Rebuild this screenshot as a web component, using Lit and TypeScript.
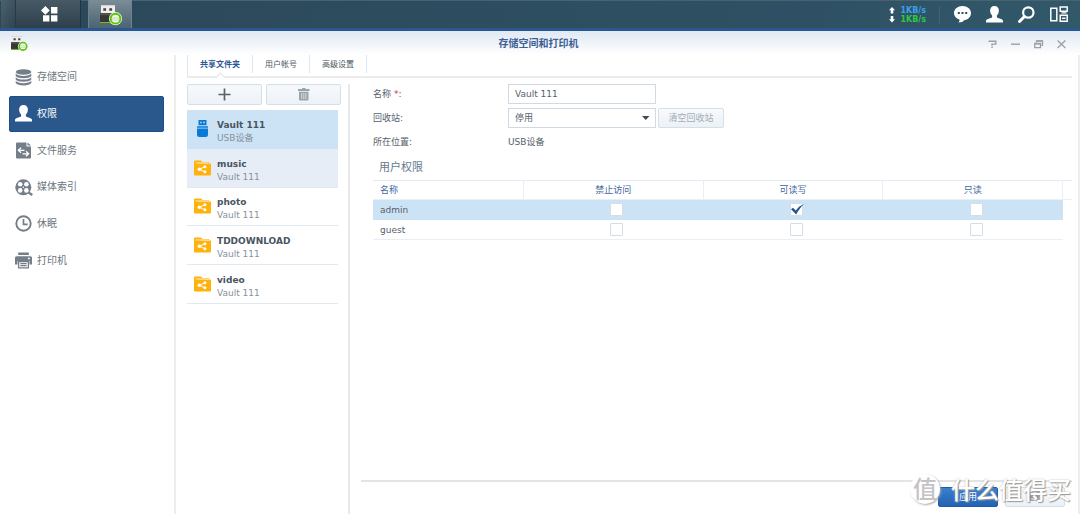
import { LitElement, html, svg, css, nothing } from "lit";
import { customElement, property, state } from "lit/decorators.js";

const glyphs: Record<string, unknown> = {
  apps: svg`<path fill="#fff" d="M4.4 0 8.8 4.4 4.4 8.8 0 4.4Z M10 1h6.4v6.4H10Z M2 9.2h6.4v6.4H2Z M10 9.2h6.4v6.4H10Z"/>`,
  chat: svg`<path fill="#fff" d="M8.5 0C13.2 0 17 3 17 7s-3.400 7-7 7.200C9 15.500 7.500 16.500 4.500 16.500 5.500 15.500 5.600 14.700 5.400 13.500 2.300 12.500 0 10 0 7 0 3 3.800 0 8.500 0Z"/><path fill="#2c4c5e" d="M3.800 6h2v2h-2Z M7.500 6h2v2h-2Z M11.200 6h2v2h-2Z"/>`,
  user: svg`<path fill="currentColor" d="M8.500 0c2.700 0 4.400 1.800 4.400 4.500 0 2.200-.9 4-2 5v1.700c.7 1.200 5.800 1.400 6.100 3.600V16.500H0V14.800c.3-2.200 5.400-2.400 6.100-3.600V9.500c-1.100-1-2-2.800-2-5C4.100 1.800 5.800 0 8.500 0Z"/>`,
  search: svg`<circle cx="10.300" cy="6.500" r="5.200" fill="none" stroke="#fff" stroke-width="2.200"/><path d="M6.500 10.500 1.500 15.500" stroke="#fff" stroke-width="3" stroke-linecap="round"/>`,
  widgets: svg`<path fill="none" stroke="#fff" stroke-width="1.500" d="M.8 2.200h6v12.600h-6Z M10.200 1h7v4.300h-7Z M10.200 9.300h7v6h-7Z"/><path fill="#fff" d="M11.500 6.300h5v1.200h-5Z M12 11.500h3.500v1.500H12Z"/>`,
  disks: svg`<g fill="#747e88"><ellipse cx="8.500" cy="3" rx="7.800" ry="2.800"/><path d="M.7 4.500C2.500 7.800 14.500 7.800 16.300 4.500V7C14.500 10 2.500 10 .7 7Z M.7 8.200C2.500 11.400 14.500 11.400 16.300 8.200V10.600C14.500 13.600 2.500 13.600 .7 10.600Z M.7 11.800C2.500 15 14.500 15 16.300 11.800V14C14.500 17.300 2.500 17.300 .7 14Z"/></g>`,
  file: svg`<path fill="#747e88" d="M2 .5h9.500v4h4.500V15.500a1 1 0 0 1-1 1H2a1 1 0 0 1-1-1V1.500a1 1 0 0 1 1-1Z M12.500.5 16 3.500h-3.500Z"/><path fill="none" stroke="#fff" stroke-width="1.300" d="M3.500 8.300h6 M6 5.800 3.400 8.300 6 10.800 M7.500 11.800h6 M11 9.300l2.600 2.500L11 14.300"/>`,
  reel: svg`<circle cx="8.300" cy="8.300" r="8" fill="#747e88"/><path d="M12 12.500 17.300 16" stroke="#747e88" stroke-width="2.200"/><g fill="#fff"><circle cx="5.200" cy="5.200" r="2.300"/><circle cx="11.400" cy="5.200" r="2.300"/><circle cx="5.200" cy="11.400" r="2.300"/><circle cx="11.400" cy="11.400" r="2.300"/><circle cx="8.300" cy="8.300" r=".8"/></g>`,
  clock: svg`<circle cx="8.500" cy="8.500" r="7.200" fill="none" stroke="#747e88" stroke-width="1.900"/><path fill="none" stroke="#747e88" stroke-width="1.700" d="M8.500 4v5.300h4.200"/>`,
  printer: svg`<path fill="#747e88" d="M3.200.5h10.600v2.600H3.200Z M1.500 4.200h14a1.500 1.500 0 0 1 1.500 1.500V12.500h-2.500V9h-12v3.500H0V5.700A1.500 1.500 0 0 1 1.500 4.200Z"/><path fill="#fff" d="M13 5.800h1.800v1.500H13Z"/><path fill="none" stroke="#747e88" stroke-width="1.300" d="M3.600 9.500h9.800v6.400H3.600Z M5.300 11.600h6.400 M5.300 13.700h6.400"/>`,
  usb: svg`<path fill="#0a7ad8" d="M2.500 0h8v5.300h-8Z M1 6.200h11v1.500H1Z M1 8.400h11V14.500a2.500 2.500 0 0 1-2.500 2.500h-6A2.500 2.500 0 0 1 1 14.500Z"/><path fill="#cce3f5" d="M4.300 1.700h1.400v1.500H4.300Z M7.300 1.700h1.400v1.500H7.300Z"/>`,
  share: svg`<path fill="#ffb20c" d="M1 3.600h15.500a.5.5 0 0 1 .5.500V14.500a1 1 0 0 1-1 1H1a1 1 0 0 1-1-1V1.500a1 1 0 0 1 1-1h6l1.500 1.500H15V3Z"/><path fill="#fff" d="M1.500 2.600h13v.7h-13Z"/><g fill="#fff"><circle cx="5.400" cy="9.300" r="1.800"/><circle cx="10.900" cy="6.800" r="1.500"/><circle cx="10.900" cy="11.800" r="1.500"/></g><path fill="none" stroke="#fff" d="M10.900 6.800 5.400 9.300l5.500 2.500"/>`,
  plus: svg`<path d="M6.500.5v12M.5 6.500h12" stroke="#56626c" stroke-width="1.700"/>`,
  trash: svg`<path fill="#9aa4ad" d="M4 0h3.500v1H11.500v2H0V1h4Z M1 3.800h9.500V11.500a1 1 0 0 1-1 1H2a1 1 0 0 1-1-1Z"/><path stroke="#dfe5eb" stroke-width=".8" d="M3.700 5v6M5.800 5v6M7.900 5v6"/>`,
  help: svg`<path fill="none" stroke="#9ba1a9" stroke-width="1.400" d="M.5 1.200h7.300v2.900H4v1.600"/><path fill="#9ba1a9" d="M3.300 6.600h1.500V8H3.300Z"/>`,
  minimize: svg`<path fill="#9ba1a9" d="M0 3.500h9v1.400H0Z"/>`,
  restore: svg`<path fill="none" stroke="#9ba1a9" stroke-width="1.300" d="M.7 3.500h5.800v4.200H.7Z M2.500 2.200V.8h6v4.500H7.500"/><path fill="#9ba1a9" d="M.7 3h5.800v1.500H.7Z M2.500.3h6v1.500h-6Z"/>`,
  close: svg`<path stroke="#9ba1a9" stroke-width="1.300" d="M.6.5 8.400 8M8.400.5.6 8"/>`,
  arrow: svg`<path fill="#3f4c57" d="M0 0h7.500L3.750 4Z"/>`,
  check: svg`<path fill="#255593" d="M0 5.200 2 3.800 4.800 6.500C7 3.500 9.500 1.300 13 0 9.800 3 7.300 6.500 5.200 10.500Z"/>`,
  rates: svg`<path fill="#fff" d="M3 0 6 3.200H4.300V6.500H1.700V3.200H0Z M3 15.500 0 12.300h1.700V9h2.600v3.300H6Z"/>`,
  device: svg`<path fill="#f0eeec" d="M2 0h14v8H2Z"/><path fill="#d7d3d0" d="M2 0h14v1.200H2Z"/><path fill="#45413f" d="M4.300 3.200h2.800v2.500H4.300Z M10.300 3.200h2.800v2.500h-2.800Z"/><path fill="#383736" d="M1 8.200h15V18H1Z"/><path fill="#575452" d="M1 8.200h15v2H1Z"/><path fill="#80b82a" d="M1 17h12v1H1Z"/><circle cx="16.500" cy="13.700" r="6.600" fill="#eef7e4"/><circle cx="16.500" cy="13.700" r="4.900" fill="#d3ecb9" stroke="#5cc313" stroke-width="2"/><path fill="#f7fff0" d="M13.800 11c.5-1 5-1 5.500 0v5.500c-.5 1-5 1-5.500 0Z"/><path stroke="#9cce76" stroke-width=".7" d="M13.800 13h5.500M13.800 15h5.500"/>`,
};

const glyph = (name: string, w: number, h: number, box = `0 0 ${w} ${h}`) =>
  html`<svg width=${w} height=${h} viewBox=${box} aria-hidden="true">${glyphs[name]}</svg>`;

const base = css`
  * {
    box-sizing: border-box;
  }
  svg {
    display: block;
    flex: none;
    overflow: visible;
  }
  button,
  input,
  select {
    font: inherit;
    color: inherit;
    margin: 0;
    padding: 0;
  }
  button {
    display: flex;
    align-items: center;
    justify-content: center;
    border: 0;
    background: none;
  }
`;

@customElement("task-bar")
class TaskBar extends LitElement {
  static styles = [
    base,
    css`
      :host {
        display: flex;
        height: 31px;
        padding-left: 1px;
        background: linear-gradient(90deg, #2b4859, #2f5064 75%, #31596a);
        border-bottom: 3px solid #2a5790;
        box-shadow: inset 0 1px #49626f;
      }
      .edge {
        width: 15px;
        background: linear-gradient(120deg, #4a626f, #2f444f);
        border-right: 1px solid #263b47;
      }
      .menu {
        width: 65px;
        padding-left: 2px;
        background: linear-gradient(#465965, #2d404c);
        border-right: 1px solid #22343f;
      }
      .running {
        width: 44px;
        margin-left: 7px;
        padding-top: 2px;
        background: linear-gradient(#7a8c97, #4c6371);
        border: 1px solid #6f838e;
        border-width: 0 1px;
      }
      .tray {
        display: flex;
        align-items: center;
        margin-left: auto;
        padding: 1px 12px 0 0;
        color: #fff;
      }
      .rates {
        display: flex;
        align-items: center;
        gap: 5px;
        font-weight: bold;
        font-size: 8px;
        line-height: 9px;
        padding-right: 13px;
        margin-right: 14px;
        border-right: 1px solid #45606f;
      }
      .up {
        color: #39a0ea;
      }
      .down {
        color: #2bc840;
      }
      .icons {
        display: flex;
        gap: 15px;
      }
    `,
  ];
  render() {
    return html`
      <span class="edge"></span>
      <button class="menu" aria-label="主菜单">${glyph("apps", 17, 16)}</button>
      <button class="running" aria-label="存储空间和打印机">${glyph("device", 22, 20)}</button>
      <div class="tray">
        <div class="rates">
          ${glyph("rates", 6, 16)}
          <div><div class="up">1KB/s</div><div class="down">1KB/s</div></div>
        </div>
        <div class="icons">
          <button aria-label="通知">${glyph("chat", 17, 17)}</button>
          <button aria-label="用户">${glyph("user", 17, 17)}</button>
          <button aria-label="搜索">${glyph("search", 17, 17)}</button>
          <button aria-label="小工具">${glyph("widgets", 18, 17)}</button>
        </div>
      </div>
    `;
  }
}

@customElement("side-nav")
class SideNav extends LitElement {
  @state() private current = "权限";
  private entries = [
    ["disks", "存储空间"],
    ["user", "权限"],
    ["file", "文件服务"],
    ["reel", "媒体索引"],
    ["clock", "休眠"],
    ["printer", "打印机"],
  ];
  static styles = [
    base,
    css`
      :host {
        display: block;
        padding: 4px 10px 0 9px;
        border-right: 2px solid #ededed;
      }
      nav {
        display: grid;
        grid-auto-rows: 1fr;
        height: 220px;
      }
      a {
        display: flex;
        align-items: center;
        gap: 5px;
        padding-left: 6px;
        font-size: 10px;
        border-radius: 2px;
        color: #6c7680;
        text-decoration: none;
      }
      .active {
        color: #fff;
        background: #2a588c;
        border: 1px solid #204e83;
        padding-left: 5px;
      }
    `,
  ];
  render() {
    return html`<nav>
      ${this.entries.map(
        ([icon, name]) => html`<a
          href="#"
          class=${name === this.current ? "active" : ""}
          @click=${(e: Event) => {
            e.preventDefault();
            this.current = name;
          }}
          >${glyph(icon, 17, 17)}${name}</a
        >`
      )}
    </nav>`;
  }
}

@customElement("folder-list")
class FolderList extends LitElement {
  private folders = [
    ["Vault 111", "USB设备"],
    ["music", "Vault 111"],
    ["photo", "Vault 111"],
    ["TDDOWNLOAD", "Vault 111"],
    ["video", "Vault 111"],
  ];
  static styles = [
    base,
    css`
      :host {
        display: block;
        padding-right: 7px;
        border-right: 2px solid #e8e8e8;
      }
      .tools {
        display: grid;
        grid-template-columns: 1fr 1fr;
        gap: 4px;
      }
      .tool {
        height: 21px;
        border: 1px solid #d5dfe8;
        border-radius: 2px;
        background: linear-gradient(#f6f9fc, #edf2f7);
      }
      ul {
        display: grid;
        grid-auto-rows: 1fr;
        height: 194px;
        margin: 5px 3px 0 0;
        padding: 0;
        list-style: none;
      }
      li {
        display: flex;
        align-items: center;
        border-bottom: 1px solid #e0e8f0;
      }
      .icon {
        display: flex;
        justify-content: center;
        width: 30px;
      }
      .caption {
        padding-top: 6px;
      }
      .device {
        background: #cce3f5;
        border-color: #cce3f5;
      }
      .hover {
        background: #e6edf6;
      }
      .name {
        font-weight: bold;
        color: #4a555f;
        line-height: 13px;
      }
      .place {
        color: #87919b;
        line-height: 13px;
      }
    `,
  ];
  render() {
    return html`
      <div class="tools">
        <button class="tool" aria-label="新增">${glyph("plus", 13, 13)}</button>
        <button class="tool" aria-label="删除" disabled>${glyph("trash", 12, 13)}</button>
      </div>
      <ul>
        ${this.folders.map(
          ([name, place], i) => html`<li class=${i === 0 ? "device" : i === 1 ? "hover" : ""}>
            <span class="icon">${i === 0 ? glyph("usb", 13, 17) : glyph("share", 17, 16)}</span>
            <div class="caption"><div class="name">${name}</div><div class="place">${place}</div></div>
          </li>`
        )}
      </ul>
    `;
  }
}

@customElement("check-box")
class CheckBox extends LitElement {
  @property({ type: Boolean }) checked = false;
  @property() name = "";
  static styles = [
    base,
    css`
      :host {
        display: block;
      }
      label {
        display: grid;
        width: 13px;
        margin: 0 auto;
      }
      input,
      svg {
        grid-area: 1 / 1;
      }
      input {
        appearance: none;
        width: 13px;
        height: 13px;
        border: 1px solid #d6dde5;
        border-radius: 1px;
        background: #fff;
      }
      svg {
        margin: 1px 0 0 1px;
        pointer-events: none;
      }
    `,
  ];
  render() {
    return html`<label>
      <input
        type="checkbox"
        aria-label=${this.name}
        .checked=${this.checked}
        @change=${(e: Event) => (this.checked = (e.target as HTMLInputElement).checked)}
      />
      ${this.checked ? glyph("check", 13, 11) : nothing}
    </label>`;
  }
}

@customElement("folder-detail")
class FolderDetail extends LitElement {
  private levels = ["禁止访问", "可读写", "只读"];
  private users = [
    { name: "admin", level: "可读写" },
    { name: "guest", level: "" },
  ];
  static styles = [
    base,
    css`
      :host {
        display: flex;
        flex-direction: column;
        color: #56616b;
      }
      .body {
        flex: 1;
        padding-left: 12px;
      }
      .form {
        display: grid;
        grid-template-columns: 135px 148px auto;
        grid-auto-rows: 20px;
        row-gap: 4px;
        column-gap: 0;
        align-items: center;
        justify-content: start;
      }
      .text,
      select {
        width: 100%;
        height: 20px;
        border: 1px solid #d0dae4;
        background: #fff;
        padding: 0 6px;
        outline: 0;
      }
      .text {
        grid-column: 2 / 4;
        width: 148px;
      }
      .required {
        color: #d0382c;
      }
      .pick {
        display: grid;
        align-items: center;
      }
      .pick > * {
        grid-area: 1 / 1;
      }
      .pick svg {
        justify-self: end;
        margin-right: 6px;
        pointer-events: none;
      }
      select {
        appearance: none;
        border-radius: 0;
      }
      .plain {
        height: 20px;
        border: 1px solid #d5dfe8;
        border-radius: 2px;
        background: linear-gradient(#f8fafc, #ecf1f7);
      }
      .clear {
        width: 66px;
        margin-left: 2px;
        color: #a3adb8;
      }
      h2 {
        margin: 8px 0 4px 6px;
        font-size: 11px;
        line-height: 16px;
        font-weight: normal;
        color: #66798d;
      }
      table {
        width: 100%;
        table-layout: fixed;
        border-collapse: separate;
        border-spacing: 0;
      }
      th,
      td {
        height: 20px;
        padding: 0;
        text-align: center;
        font-weight: normal;
        border-bottom: 1px solid #e8eff6;
      }
      th {
        color: #42699d;
        border-top: 1px solid #e3eaf1;
        border-right: 1px solid #e8eff6;
      }
      td {
        padding-left: 6px;
      }
      .first {
        width: 21.6%;
        padding-left: 7px;
        text-align: left;
      }
      .gutter {
        width: 9px;
        border-right: 0;
      }
      td.gutter {
        border: 0;
      }
      .selected td:not(.gutter) {
        background: #cce3f5;
        border-color: #cce3f5;
      }
      footer {
        display: flex;
        justify-content: flex-end;
        gap: 7px;
        padding: 5px 7px 7px;
        border-top: 2px solid #e4e4e4;
      }
      footer button {
        width: 60px;
      }
      .apply {
        height: 20px;
        color: #fff;
        border: 1px solid #1e5caa;
        border-radius: 2px;
        background: linear-gradient(#3b7fce, #2263b2);
      }
    `,
  ];
  render() {
    return html`
      <div class="body">
        <div class="form">
          <label for="name">名称 <span class="required">*</span>:</label>
          <input class="text" id="name" value="Vault 111" />
          <label for="bin">回收站:</label>
          <div class="pick">
            <select id="bin">
              <option>停用</option>
              <option>启用</option>
            </select>
            ${glyph("arrow", 8, 4)}
          </div>
          <button class="plain clear" disabled>清空回收站</button>
          <span>所在位置:</span>
          <span>USB设备</span>
        </div>
        <h2>用户权限</h2>
        <table>
          <thead>
            <tr>
              <th class="first">名称</th>
              ${this.levels.map((l) => html`<th>${l}</th>`)}
              <th class="gutter"></th>
            </tr>
          </thead>
          <tbody>
            ${this.users.map(
              (u, i) => html`<tr class=${i === 0 ? "selected" : ""}>
                <td class="first">${u.name}</td>
                ${this.levels.map(
                  (l) => html`<td>
                    <check-box name=${`${u.name} ${l}`} ?checked=${u.level === l}></check-box>
                  </td>`
                )}
                <td class="gutter"></td>
              </tr>`
            )}
          </tbody>
        </table>
      </div>
      <footer>
        <button class="apply">应用</button>
        <button class="plain">重置</button>
      </footer>
    `;
  }
}

@customElement("app-root")
class AppRoot extends LitElement {
  @state() private tab = "共享文件夹";
  private tabs = ["共享文件夹", "用户帐号", "高级设置"];
  static styles = [
    base,
    css`
      :host {
        position: relative;
        display: flex;
        flex-direction: column;
        min-height: 100vh;
        background: #fff;
        font: 9px/12px "DejaVu Sans", "Noto Sans CJK SC", sans-serif;
        overflow: hidden;
      }
      header {
        display: grid;
        grid-template-columns: 1fr auto 1fr;
        align-items: center;
        height: 24px;
        padding: 1px 14px 0 11px;
        background: linear-gradient(#e0e8f3, #fff);
      }
      h1 {
        margin: 0;
        font-size: 10px;
        font-weight: bold;
        color: #3c5f96;
      }
      .controls {
        display: flex;
        align-items: center;
        justify-content: flex-end;
        gap: 14px;
      }
      .window {
        flex: 1;
        display: grid;
        grid-template-columns: 176px 1fr;
        border-right: 2px solid #eee;
      }
      .main {
        display: flex;
        flex-direction: column;
        padding: 0 6px 0 11px;
      }
      .tabs {
        display: flex;
        height: 23px;
        border-bottom: 2px solid #ebebeb;
        border-left: 1px solid #dfe6ee;
      }
      .tab {
        position: relative;
        padding: 2px 12px 0;
        font-size: 8px;
        color: #4c5863;
        border-right: 1px solid #dfe6ee;
        height: 18px;
      }
      .current {
        color: #2b5597;
        font-weight: bold;
      }
      .current::after {
        content: "";
        position: absolute;
        left: 50%;
        top: 19px;
        width: 6px;
        height: 6px;
        margin-left: -3px;
        background: #fff;
        border: 1px solid #e4e4e4;
        border-width: 1px 0 0 1px;
        transform: rotate(45deg);
      }
      .panes {
        flex: 1;
        display: grid;
        grid-template-columns: 163px 1fr;
        column-gap: 11px;
        padding-top: 6px;
      }
      .mark {
        position: absolute;
        right: 9px;
        bottom: 8px;
        display: flex;
        align-items: center;
        gap: 11px;
        font: 500 24px/34px "Noto Sans CJK SC", sans-serif;
        color: #fff;
        text-shadow: 1px 1px 1px #999, 0 0 2px #bbb;
        pointer-events: none;
      }
      .seal {
        width: 30px;
        height: 30px;
        line-height: 28px;
        text-align: center;
        border-radius: 50%;
        background: #fff;
        color: #c4c4c4;
        box-shadow: 1px 1px 2px #aaa;
        text-shadow: none;
      }
    `,
  ];
  render() {
    return html`
      <task-bar></task-bar>
      <header>
        ${glyph("device", 17, 17, "1 0 22 20")}
        <h1>存储空间和打印机</h1>
        <div class="controls">
          <button aria-label="帮助">${glyph("help", 9, 8)}</button>
          <button aria-label="最小化">${glyph("minimize", 9, 8)}</button>
          <button aria-label="还原">${glyph("restore", 9, 8)}</button>
          <button aria-label="关闭">${glyph("close", 9, 8)}</button>
        </div>
      </header>
      <div class="window">
        <side-nav></side-nav>
        <div class="main">
          <div class="tabs">
            ${this.tabs.map(
              (t) => html`<button class="tab ${t === this.tab ? "current" : ""}" @click=${() => (this.tab = t)}>
                ${t}
              </button>`
            )}
          </div>
          <div class="panes">
            <folder-list></folder-list>
            <folder-detail></folder-detail>
          </div>
        </div>
      </div>
      <div class="mark"><span class="seal">值</span><span>什么值得买</span></div>
    `;
  }
}
